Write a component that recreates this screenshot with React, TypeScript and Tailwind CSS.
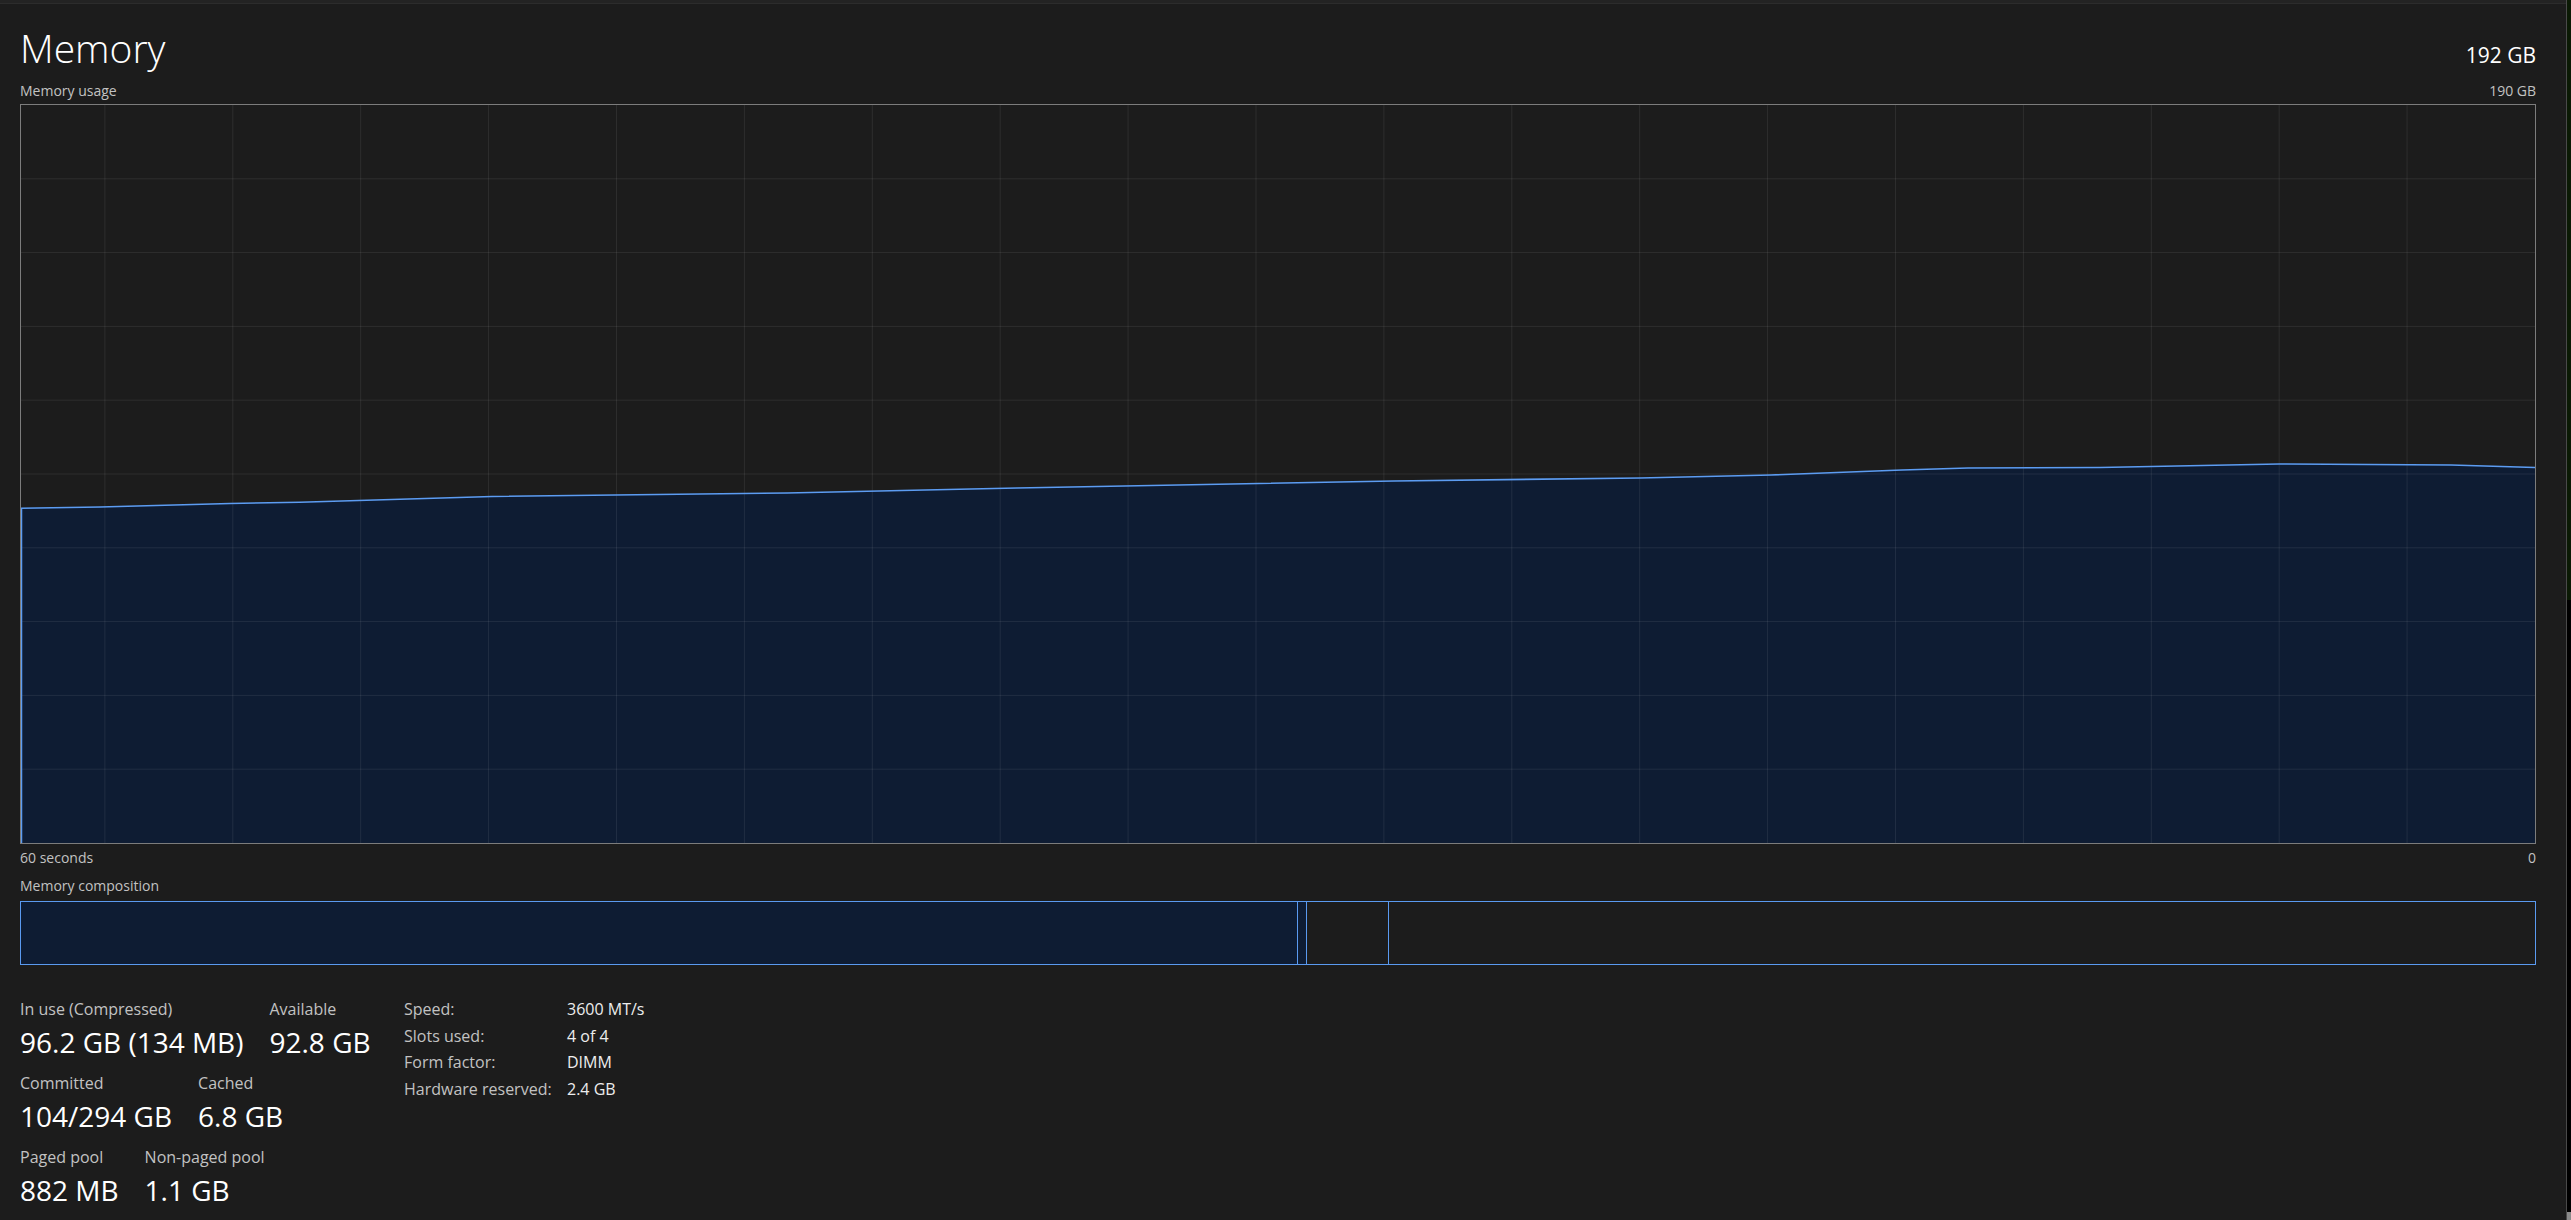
const usagePoints: [number, number][] = [
  [0, 403.3],
  [79, 402],
  [209, 398.5],
  [279, 397.2],
  [471, 391.5],
  [766, 388],
  [996, 383],
  [1373, 376],
  [1619, 373],
  [1750, 370],
  [1881, 365],
  [1947, 363],
  [2079, 362.5],
  [2258, 359],
  [2430, 360],
  [2514, 362.5],
];

const CHART_W = 2514;
const CHART_H = 738;

const leftStats = [
  [
    { label: "In use (Compressed)", value: "96.2 GB (134 MB)" },
    { label: "Available", value: "92.8 GB" },
  ],
  [
    { label: "Committed", value: "104/294 GB" },
    { label: "Cached", value: "6.8 GB" },
  ],
  [
    { label: "Paged pool", value: "882 MB" },
    { label: "Non-paged pool", value: "1.1 GB" },
  ],
] as const;

const specs = [
  { label: "Speed:", value: "3600 MT/s" },
  { label: "Slots used:", value: "4 of 4" },
  { label: "Form factor:", value: "DIMM" },
  { label: "Hardware reserved:", value: "2.4 GB" },
] as const;

function UsageChart() {
  const line = usagePoints.map(([x, y]) => `${x},${y}`).join(" ");
  const area = `0,${CHART_H} ${line} ${CHART_W},${CHART_H}`;
  const cols = Array.from({ length: 19 }, (_, i) => CHART_W - 127.9 * (i + 1));
  const rows = Array.from({ length: 9 }, (_, i) => 73.8 * (i + 1));

  return (
    <div className="mt-[5px] h-[740px] w-full border border-[#7c7c7c]">
      <svg
        className="block h-full w-full"
        viewBox={`0 0 ${CHART_W} ${CHART_H}`}
        preserveAspectRatio="none"
      >
        <polygon points={area} fill="#0e1c33" />
        {cols.map((x) => (
          <line key={x} x1={x} x2={x} y1={0} y2={CHART_H} stroke="rgba(255,255,255,0.08)" strokeWidth={1} />
        ))}
        {rows.map((y) => (
          <line key={y} x1={0} x2={CHART_W} y1={y} y2={y} stroke="rgba(255,255,255,0.08)" strokeWidth={1} />
        ))}
        <polyline points={line} fill="none" stroke="#5c9cf2" strokeWidth={1.6} />
        <line x1={0.5} x2={0.5} y1={403.3} y2={CHART_H} stroke="#5c9cf2" strokeWidth={1.5} />
      </svg>
    </div>
  );
}

export default function App() {
  return (
    <div
      className="flex h-[1220px] w-full overflow-hidden bg-[#1c1c1c] text-white"
      style={{ fontFamily: '"Open Sans", "Noto Sans", sans-serif' }}
    >
      <div className="flex min-w-0 flex-1 flex-col">
        <div className="h-[4px] border-b border-[#2c2c2c] bg-[#232323]" />

        <main className="pl-[20px] pr-[30px]">
          <div className="mt-[24px] flex items-baseline justify-between">
            <h1 className="text-[39px] font-light leading-none text-white">Memory</h1>
            <span className="text-[21px] leading-none text-white">192 GB</span>
          </div>

          <div className="mt-[16px] flex justify-between text-[14px] leading-[16px] text-[#c2c2c2]">
            <span>Memory usage</span>
            <span>190 GB</span>
          </div>

          <UsageChart />

          <div className="mt-[6px] flex justify-between text-[14px] leading-[16px] text-[#c2c2c2]">
            <span>60 seconds</span>
            <span>0</span>
          </div>

          <p className="mt-[12px] text-[14px] leading-[16px] text-[#c2c2c2]">Memory composition</p>

          <div className="mt-[7px] flex h-[64px] w-full border border-[#5a9af0]">
            <div className="w-[1277px] border-r border-[#5a9af0] bg-[#0e1c33]" />
            <div className="w-[9px] border-r border-[#5a9af0] bg-[#0e1c33]" />
            <div className="w-[82px] border-r border-[#5a9af0]" />
            <div className="flex-1" />
          </div>

          <section className="mt-[31px] flex items-start">
            <div className="w-[384px] pt-[4px]">
              {leftStats.map((row, i) => (
                <div key={i} className={`flex gap-[26px] ${i > 0 ? "mt-[16px]" : ""}`}>
                  {row.map((item) => (
                    <div key={item.label}>
                      <p className="whitespace-nowrap text-[16px] leading-[18px] text-[#c2c2c2]">
                        {item.label}
                      </p>
                      <p className="mt-[8px] whitespace-nowrap text-[28px] leading-[32px] text-white">
                        {item.value}
                      </p>
                    </div>
                  ))}
                </div>
              ))}
            </div>

            <div className="text-[16px] leading-[26.7px]">
              {specs.map((item) => (
                <div key={item.label} className="flex whitespace-nowrap">
                  <span className="w-[163px] text-[#c2c2c2]">{item.label}</span>
                  <span className="text-[#ededed]">{item.value}</span>
                </div>
              ))}
            </div>
          </section>
        </main>
      </div>

      <div className="flex w-[5px] flex-col border-l border-[#4a4a4a]">
        <div className="h-[600px] bg-[#0b1a05]" />
        <div className="flex-1 bg-black" />
        <div className="h-[8px] bg-[#8a8a8a]" />
      </div>
    </div>
  );
}
